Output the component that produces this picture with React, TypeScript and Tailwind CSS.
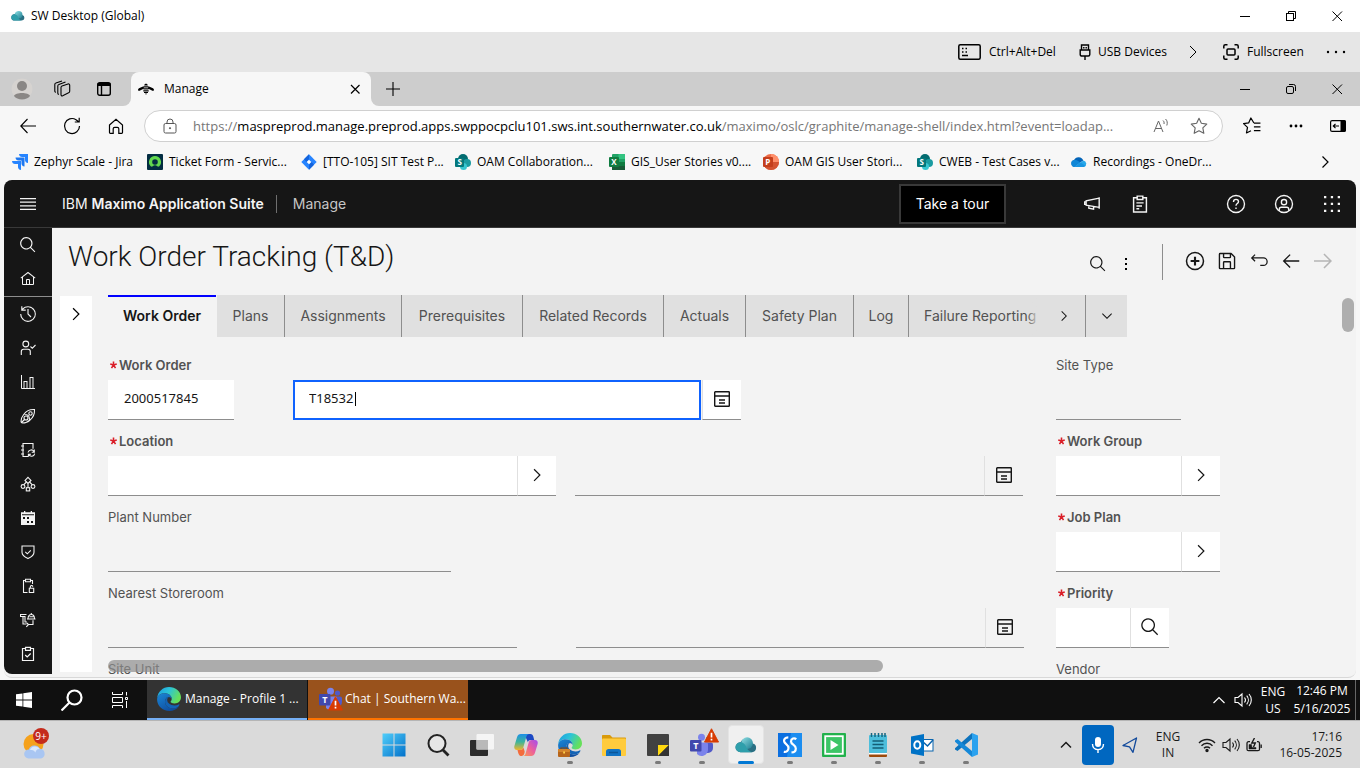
import React, { useId } from "react";
import type { ReactNode } from "react";

type IconProps = { size?: number; className?: string };

/* ---------- icon helpers ---------- */

function Solid({ d, size = 16, box = 32, className = "" }: IconProps & { d: string; box?: number }) {
  return (
    <svg width={size} height={size} viewBox={`0 0 ${box} ${box}`} fill="currentColor" className={`shrink-0 ${className}`} aria-hidden="true">
      <path d={d} />
    </svg>
  );
}

function Line({ children, size = 16, box = 16, weight = 1, className = "" }: IconProps & { children: ReactNode; box?: number; weight?: number }) {
  return (
    <svg width={size} height={size} viewBox={`0 0 ${box} ${box}`} fill="none" stroke="currentColor" strokeWidth={weight} className={`shrink-0 ${className}`} aria-hidden="true">
      {children}
    </svg>
  );
}

const SEARCH = "M29,27.5859l-7.5521-7.5521a11.0177,11.0177,0,1,0-1.4141,1.4141L27.5859,29ZM4,13a9,9,0,1,1,9,9A9.01,9.01,0,0,1,4,13Z";
const HOME = "M16.6123,2.2138a1.01,1.01,0,0,0-1.2427,0L1,13.4194l1.2427,1.5717L4,13.6209V26a2.0041,2.0041,0,0,0,2,2H26a2.0037,2.0037,0,0,0,2-2V13.63L29.7573,15,31,13.4282ZM18,26H14V18h4Zm2,0V18a2.0023,2.0023,0,0,0-2-2H14a2.002,2.002,0,0,0-2,2v8H6V12.0615l10-7.79,10,7.8005V26Z";
const RECENT = "M20.59 22 15 16.41V7h2v8.58l5 5.01L20.59 22zM16,2A13.94,13.94,0,0,0,6,6.23V2H4v8h8V8H7.08A12,12,0,1,1,4,16H2A14,14,0,1,0,16,2Z";
const BARS = "M27,28V6H19V28H15V14H7V28H4V2H2V28a2,2,0,0,0,2,2H30V28ZM13,28H9V16h4Zm12,0H21V8h4Z";
const CHEVRON_RIGHT = "M22 16 12 26 10.6 24.6 19.2 16 10.6 7.4 12 6z";
const CHEVRON_DOWN = "M16 22 6 12 7.4 10.6 16 19.2 24.6 10.6 26 12z";
const SAVE = "M27.71,9.29l-5-5A1,1,0,0,0,22,4H6A2,2,0,0,0,4,6V26a2,2,0,0,0,2,2H26a2,2,0,0,0,2-2V10A1,1,0,0,0,27.71,9.29ZM12,6h8v4H12Zm8,20H12V18h8Zm2,0V18a2,2,0,0,0-2-2H12a2,2,0,0,0-2,2v8H6V6h4v4a2,2,0,0,0,2,2h8a2,2,0,0,0,2-2V6.41l4,4V26Z";
const UNDO = "M23,10H6.8149l3.5874-3.5859L9,5,3,11,9,17l1.4023-1.4146L6.8179,12H23a5,5,0,0,1,0,10H18v2h5a7,7,0,0,0,0-14Z";
const ARROW_LEFT = "M14 26 15.41 24.59 7.83 17 28 17 28 15 7.83 15 15.41 7.41 14 6 4 16 14 26z";
const ARROW_RIGHT = "M18 6 16.57 7.393 24.15 15 4 15 4 17 24.15 17 16.57 24.573 18 26 28 16 18 6z";

function Cloud({ size = 14 }: IconProps) {
  const id = useId();
  return (
    <svg width={size} height={size} viewBox="0 0 20 20" className="shrink-0" aria-hidden="true">
      <defs>
        <linearGradient id={id} x1="0" y1="0" x2="1" y2="1">
          <stop offset="0" stopColor="#8fdfe4" />
          <stop offset="1" stopColor="#1d7f92" />
        </linearGradient>
      </defs>
      <path d="M5 16.500a4.500 4.500 0 0 1 0-9A6 6 0 0 1 16 8.600a4 4 0 0 1-.5 7.900z" fill="#2a6f83" />
      <circle cx="11" cy="8.300" r="5.300" fill={`url(#${id})`} />
      <path d="M5 16.500a4.500 4.500 0 1 1 3-7.800c2 1.400 2 3.500 3.600 5.500 1 1.300 2.500 2 4 2.300z" fill="#2f9fab" />
    </svg>
  );
}

function EdgeLogo({ size = 24, briefcase = false }: IconProps & { briefcase?: boolean }) {
  const id = useId();
  return (
    <svg width={size} height={size} viewBox="0 0 24 24" className="shrink-0" aria-hidden="true">
      <defs>
        <linearGradient id={`${id}a`} x1="0" y1="0" x2="1" y2=".4">
          <stop offset="0" stopColor="#1c9be0" />
          <stop offset=".5" stopColor="#2cc3d8" />
          <stop offset="1" stopColor="#66e05a" />
        </linearGradient>
        <linearGradient id={`${id}b`} x1="0" y1="0" x2=".7" y2="1">
          <stop offset="0" stopColor="#1b87d6" />
          <stop offset="1" stopColor="#0e4a9c" />
        </linearGradient>
      </defs>
      <path d="M.2 11C.8 4.700 5.900 0 12 0c6.600 0 12 4.400 12 10.300 0 3.600-2.700 6.200-6.300 6.200-3 0-4.300-1.100-4.100-1.900.2-.6 1.100-1 1.100-2.700C14.700 9.200 12 6.300 7.700 6.300 3.900 6.300 1.200 8.300.2 11z" fill={`url(#${id}a)`} />
      <path d="M.1 12.500C.1 9 3.400 6.300 7.700 6.300c4.300 0 7 2.900 7 5.600-.6-1.300-1.800-2-3-2-2 0-3.700 2-3.700 4.900 0 4 4 6.700 8 6.700 2.400 0 4.400-.7 5.700-1.700-1.800 2.600-5.400 4.200-9.200 4.200C5.500 24 .1 18.800.1 12.500z" fill={`url(#${id}b)`} />
      <path d="M11.700 9.900c-2 0-3.700 2-3.700 4.900 0 4 4 6.700 8 6.700 3.200 0 5.600-1.400 6.400-3.400.3-.7-.3-.9-.8-.6-1.200.6-2.600.9-4 .9-4 0-7.400-2.300-7.400-5.400 0-1.300.6-2.300 1.500-3.100z" fill="#1363b5" />
      {briefcase && (
        <g>
          <path d="M3 16.500V15h6v1.500" stroke="#8a4708" strokeWidth="1.200" fill="none" />
          <rect x="0" y="16" width="12" height="8" rx="1" fill="#b7651a" />
          <rect x="0" y="16" width="12" height="3" rx="1" fill="#d4842b" />
          <rect x="5.200" y="18.500" width="1.800" height="2" fill="#ffd04a" />
        </g>
      )}
    </svg>
  );
}

function Teams({ size = 24 }: IconProps) {
  return (
    <svg width={size} height={size} viewBox="0 0 24 24" className="shrink-0" aria-hidden="true">
      <circle cx="18.500" cy="6" r="2.600" fill="#5059c9" />
      <circle cx="11.500" cy="4.200" r="3.500" fill="#7b83eb" />
      <path d="M15.500 9.500H21c1.100 0 2 .9 2 2V15a5 5 0 0 1-5 5c-1.500 0-2.500-.5-2.500-.5z" fill="#5059c9" />
      <path d="M7 9.500h9.500c.8 0 1.500.7 1.500 1.500v5.500a6.500 6.500 0 0 1-11 4.600z" fill="#7b83eb" />
      <rect x="0" y="7" width="11.500" height="11.500" rx="1" fill="#4148ad" />
      <text x="5.750" y="16" textAnchor="middle" fontSize="9" fontWeight="700" fontFamily="Open Sans, sans-serif" fill="#fff">T</text>
    </svg>
  );
}

function Warning({ size = 15, className = "" }: IconProps) {
  return (
    <svg width={size} height={size} viewBox="0 0 16 16" className={className} aria-hidden="true">
      <path d="M8 .8 15.500 15H.5z" fill="#d83b01" stroke="#d83b01" strokeLinejoin="round" />
      <path d="M8 5v5M8 11.500v1.800" stroke="#fff" strokeWidth="1.800" />
    </svg>
  );
}

function WindowsEleven() {
  const id = useId();
  return (
    <svg width="24" height="24" viewBox="0 0 24 24" aria-hidden="true">
      <defs>
        <linearGradient id={id} gradientUnits="userSpaceOnUse" x1="0" y1="0" x2="24" y2="24">
          <stop offset="0" stopColor="#53d0fb" />
          <stop offset="1" stopColor="#006fc9" />
        </linearGradient>
      </defs>
      <path d="M.5.5h11v11H.5zM12.500.5h11v11h-11zM.5 12.500h11v11H.5zM12.500 12.500h11v11h-11z" fill={`url(#${id})`} />
    </svg>
  );
}

function Copilot() {
  const id = useId();
  return (
    <svg width="24" height="24" viewBox="0 0 24 24" aria-hidden="true">
      <defs>
        <linearGradient id={`${id}a`} x1="0" y1="0" x2="0" y2="1">
          <stop offset="0" stopColor="#1d8fe8" />
          <stop offset=".5" stopColor="#3db59a" />
          <stop offset="1" stopColor="#f0b52a" />
        </linearGradient>
        <linearGradient id={`${id}b`} x1="1" y1="0" x2="0" y2="1">
          <stop offset="0" stopColor="#a24df0" />
          <stop offset=".5" stopColor="#ec5f9c" />
          <stop offset="1" stopColor="#fb9a4e" />
        </linearGradient>
      </defs>
      <path d="M11 1h5.500c1.500 0 2.400 1 2.800 2.400L20.200 7h-3.500c-1.600 0-2.300.8-2.800 2.300L12 5z" fill="#1c49c4" />
      <path d="M6.800 1H15c-1.800.3-2.300 1.500-2.800 3.300L9.300 14.600C8.900 16 8 17 6.300 17H3C.8 17-.2 15.300.4 13L3 4.200C3.700 2 5 1 6.800 1z" fill={`url(#${id}a)`} />
      <path d="M17.200 23H9c1.800-.3 2.300-1.500 2.800-3.300L14.700 9.400C15.100 8 16 7 17.700 7H21c2.200 0 3.200 1.700 2.600 4L21 19.800c-.7 2.200-2 3.200-3.800 3.200z" fill={`url(#${id}b)`} />
      <path d="M3.500 17h3c1.500 0 2.500-1 3-2.400l1.200 4.200c-.5 2.300-1 4.200-3 4.200C5 23 4.500 21 3.500 17z" fill="#f36c3c" />
    </svg>
  );
}

function OfficeTile({ kind }: { kind: "S" | "X" | "P" }) {
  return (
    <svg width="16" height="16" viewBox="0 0 16 16" className="shrink-0" aria-hidden="true">
      {kind === "S" && (
        <g>
          <circle cx="8" cy="5" r="5" fill="#036c70" />
          <circle cx="12" cy="9" r="4" fill="#1a9ba1" />
          <circle cx="8.500" cy="12.500" r="3.500" fill="#37c6d0" />
          <rect x="0" y="4" width="9" height="9" rx="1" fill="#03787c" />
        </g>
      )}
      {kind === "X" && (
        <g>
          <rect x="3" y="0" width="13" height="16" rx="1" fill="#21a366" />
          <path d="M9.500 0H15a1 1 0 0 1 1 1v4H9.500z" fill="#33c481" />
          <path d="M3 8h13v8H3z" fill="#185c37" />
          <path d="M9.500 8H16v4H9.500z" fill="#107c41" />
          <rect x="0" y="3" width="10" height="10" rx="1" fill="#107c41" />
        </g>
      )}
      {kind === "P" && (
        <g>
          <circle cx="8" cy="8" r="8" fill="#ed6c47" />
          <path d="M8 0a8 8 0 0 1 8 8H8z" fill="#ff8f6b" />
          <path d="M0 8h16A8 8 0 0 1 0 8z" fill="#d35230" />
          <rect x="0" y="3" width="10" height="10" rx="1" fill="#c43e1c" />
        </g>
      )}
      <text x="4.800" y="11.200" textAnchor="middle" fontSize="8" fontWeight="700" fontFamily="Open Sans, sans-serif" fill="#fff">{kind}</text>
    </svg>
  );
}

const zephyr = (
  <svg width="16" height="16" viewBox="0 0 16 16" className="shrink-0" aria-hidden="true">
    <path d="M7 0h9v9c-2 0-3-1.500-3-3V3h-3C8.500 3 7 2 7 0z" fill="#2684ff" />
    <path d="M3.500 3.500h9v9c-2 0-3-1.500-3-3v-3h-3c-1.500 0-3-1-3-3z" fill="#1f78f0" />
    <path d="M0 7h9v9c-2 0-3-1.500-3-3v-3H3c-1.500 0-3-1-3-3z" fill="#2684ff" />
  </svg>
);
const ticket = (
  <svg width="16" height="16" viewBox="0 0 16 16" className="shrink-0" aria-hidden="true">
    <rect width="16" height="16" rx="1" fill="#032d42" />
    <path d="M8 2a6 6 0 0 0-4.300 10.200c.6.6 1.400.6 2 .1a3.600 3.600 0 0 1 4.600 0c.6.5 1.400.5 2-.1A6 6 0 0 0 8 2zm0 3.200a2.800 2.800 0 1 1 0 5.600 2.800 2.800 0 0 1 0-5.600z" fill="#62d84e" />
  </svg>
);
const jira = (
  <svg width="16" height="16" viewBox="0 0 16 16" className="shrink-0" aria-hidden="true">
    <path d="M8 .3 15.700 8 8 15.700.3 8z" fill="#2684ff" />
    <path d="M8 .3v5L5.500 8 3 5.300z" fill="#1463dc" />
    <path d="M8 15.700v-5L10.500 8l2.500 2.700z" fill="#1463dc" />
    <path d="M8 5.700 10.300 8 8 10.300 5.700 8z" fill="#fff" />
  </svg>
);
const onedrive = (
  <svg width="16" height="16" viewBox="0 0 16 16" className="shrink-0" aria-hidden="true">
    <path d="M3.500 13A3.500 3.500 0 0 1 3 6.100 5 5 0 0 1 12.300 6.600L7 10z" fill="#0364b8" />
    <path d="M12.300 6.600A3.300 3.300 0 0 1 13 13H3.500z" fill="#28a8ea" />
    <path d="M3 6.100c1.800-.4 3 .2 4.500 1.200L14 11.500c-.6 1-1 1.500-1.500 1.500h-9A3.500 3.500 0 0 1 3 6.100z" fill="#1490df" opacity=".8" />
  </svg>
);

/* ---------- shared parts ---------- */

function IconButton({ label, className, children }: { label: string; className: string; children: ReactNode }) {
  return (
    <button type="button" aria-label={label} className={`flex shrink-0 items-center justify-center ${className}`}>
      {children}
    </button>
  );
}

function WindowControls({ round = false }: { round?: boolean }) {
  return (
    <div className="flex h-full">
      <IconButton label="Minimize" className="h-full w-[46px]">
        <Line><path d="M3 8.500h10" /></Line>
      </IconButton>
      <IconButton label="Restore" className="h-full w-[46px]">
        <Line>
          <rect x="3.500" y="5.500" width="7" height="7" rx={round ? 1.5 : 0} />
          <path d={round ? "M6 3.500h4.500a2 2 0 0 1 2 2V10" : "M5.500 5.500v-2h7v7h-2"} />
        </Line>
      </IconButton>
      <IconButton label="Close" className="h-full w-[46px]">
        <Line><path d="m3.500 3.500 9.500 9.500M13 3.500 3.500 13" /></Line>
      </IconButton>
    </div>
  );
}

/* ---------- remote session chrome ---------- */

function SessionBar() {
  return (
    <>
      <header className="flex h-8 shrink-0 items-center justify-between bg-white pl-[11px]">
        <div className="flex items-center gap-[6px]">
          <Cloud size={14} />
          <h1>SW Desktop (Global)</h1>
        </div>
        <WindowControls />
      </header>
      <div className="flex h-10 shrink-0 items-center justify-end bg-[#e6e6e6] pr-1">
        <button type="button" className="flex w-[121px] items-center gap-2">
          <svg width="23" height="16" viewBox="0 0 23 16" fill="none" stroke="#000" strokeWidth="1.500" aria-hidden="true">
            <rect x=".8" y=".8" width="21.400" height="14.400" rx="1.500" />
            <path d="M4 4.500h1.500M7.500 4.500H9M4 8h1.500M7.500 8H9M4 11.500h6" />
          </svg>
          Ctrl+Alt+Del
        </button>
        <button type="button" className="flex w-[104px] items-center gap-[7px]">
          <svg width="12" height="16" viewBox="0 0 12 16" fill="none" stroke="#000" strokeWidth="1.400" aria-hidden="true">
            <path d="M2.500 6V1h7v5M1.200 6h9.600v4.500c0 1-.8 1.500-1.500 1.500H2.700c-.7 0-1.500-.5-1.500-1.500zM6 12v4M4.800 3v1.500M7.200 3v1.500" />
          </svg>
          USB Devices
        </button>
        <IconButton label="More devices" className="mr-5 w-5">
          <Line><path d="m5 2 6 6-6 6" /></Line>
        </IconButton>
        <button type="button" className="flex w-[93px] items-center gap-2">
          <Line weight={1.5}>
            <path d="M.8 4.500V2.300c0-.8.700-1.500 1.500-1.500h2.200M11.500.8h2.200c.8 0 1.500.7 1.500 1.500v2.200M15.200 11.500v2.200c0 .8-.7 1.500-1.500 1.500h-2.200M4.500 15.200H2.300c-.8 0-1.500-.7-1.500-1.500v-2.200" />
            <rect x="4" y="5" width="8" height="6" rx="1" />
          </Line>
          Fullscreen
        </button>
        <IconButton label="More options" className="w-10">
          <svg width="20" height="4" viewBox="0 0 20 4" aria-hidden="true"><circle cx="2" cy="2" r="1.200" /><circle cx="10" cy="2" r="1.200" /><circle cx="18" cy="2" r="1.200" /></svg>
        </IconButton>
      </div>
    </>
  );
}

/* ---------- browser chrome ---------- */

const bookmarks: { label: string; icon: ReactNode; width: string }[] = [
  { label: "Zephyr Scale - Jira", icon: zephyr, width: "w-[135px]" },
  { label: "Ticket Form - Servic...", icon: ticket, width: "w-[154px]" },
  { label: "[TTO-105] SIT Test P...", icon: jira, width: "w-[154px]" },
  { label: "OAM Collaboration...", icon: <OfficeTile kind="S" />, width: "w-[154px]" },
  { label: "GIS_User Stories v0....", icon: <OfficeTile kind="X" />, width: "w-[154px]" },
  { label: "OAM GIS User Stori...", icon: <OfficeTile kind="P" />, width: "w-[154px]" },
  { label: "CWEB - Test Cases v...", icon: <OfficeTile kind="S" />, width: "w-[154px]" },
  { label: "Recordings - OneDr...", icon: onedrive, width: "w-[154px]" },
];

function BrowserBar() {
  return (
    <div className="shrink-0 bg-[#f7f7f7]">
      <div className="flex h-[34px] items-stretch">
        <div className="flex items-center rounded-br-lg bg-[#cdcdcd] pr-[3px]">
          <IconButton label="Profile" className="w-11">
            <svg width="22" height="22" viewBox="0 0 22 22" aria-hidden="true">
              <circle cx="11" cy="11" r="10.500" fill="#d6d3d0" />
              <circle cx="11" cy="8" r="5" fill="#8a8785" />
              <path d="M3 18c1-4 15-4 16 0-3 4.500-13 4.500-16 0z" fill="#8a8785" />
            </svg>
          </IconButton>
          <IconButton label="Workspaces" className="w-9">
            <Line size={18} box={18} weight={1.1}>
              <path d="M8 7.500c0-.7.400-1.200 1-1.400l6-2.100c1-.3 1.700.2 1.700 1.200v6c0 .8-.4 1.300-1.100 1.500L9.700 15.800c-1 .4-1.700-.2-1.700-1.100z" />
              <path d="M6 14.300c-.8.100-1.200-.4-1.200-1.200V6c0-.8.400-1.300 1.100-1.500L12.500 2M3 12.200c-.8.100-1.200-.4-1.200-1.200V4.500c0-.8.4-1.300 1.100-1.500L9 .9" />
            </Line>
          </IconButton>
          <IconButton label="Tab actions" className="w-12">
            <Line weight={1.4}>
              <rect x="1.700" y="1.700" width="12.600" height="12.600" rx="2" />
              <path d="M1.700 3.500h12.600" strokeWidth="3" />
              <path d="M5.500 4v10" />
            </Line>
          </IconButton>
        </div>
        <div className="bg-[#cdcdcd]">
          <div className="flex h-full w-60 items-center rounded-t-lg bg-[#f7f7f7] pl-[7px] pr-2">
            <svg width="16" height="16" viewBox="0 0 16 16" aria-hidden="true">
              <path d="M5.600 5.200 1 7.200c-1 .5-1.200 1.800-.7 2.400.3.400.8.400 1.300.2L6 7.500zM10.400 5.200 15 7.200c1 .5 1.200 1.800.7 2.400-.3.400-.8.400-1.300.2L10 7.500zM6.200 4.500c0-2.400 3.600-2.400 3.600 0zM5.800 5.200h4.400v1.300H5.800zM5.500 7.300h5v1.200h-5zM5.300 9.200h5.400v1.200H5.300zM6 11.100h4v1H6zM7 12.600h2L8 13.800z" />
            </svg>
            <span className="ml-[10px] flex-1">Manage</span>
            <IconButton label="Close tab" className="size-4">
              <Line weight={1.2}><path d="m4 4 8.500 8.500M12.500 4 4 12.500" /></Line>
            </IconButton>
          </div>
        </div>
        <div className="flex flex-1 items-center justify-between rounded-bl-lg bg-[#cdcdcd]">
          <IconButton label="New tab" className="w-11">
            <Line weight={1.1}><path d="M8 1v14M1 8h14" /></Line>
          </IconButton>
          <WindowControls round />
        </div>
      </div>

      <div className="flex h-10 items-center pl-[6px] pr-[2px]">
        <IconButton label="Back" className="w-11">
          <Line weight={1.1}><path d="M7.500 1 .8 8l6.700 7M.8 8H16" /></Line>
        </IconButton>
        <IconButton label="Reload" className="w-11">
          <Line size={18} box={18} weight={1.2}><path d="M16.500 9A7.500 7.500 0 1 1 13 2.700L16 5M16.200.8V5h-4.400" /></Line>
        </IconButton>
        <IconButton label="Home" className="mr-[6px] w-11">
          <Line weight={1.200}><path d="M1.500 7 8 1.200 14.500 7v7.500a.8.8 0 0 1-.8.8h-2.900v-4.500a1.500 1.500 0 0 0-1.500-1.500H6.700a1.500 1.500 0 0 0-1.500 1.500v4.500H2.300a.8.8 0 0 1-.8-.8z" /></Line>
        </IconButton>
        <div className="flex h-8 min-w-0 flex-1 items-center rounded-full border border-[#d0d0d0] bg-white pl-[17px] pr-[5px]">
          <Line size={16} weight={1} className="text-[#555]">
            <rect x="2" y="5.500" width="12" height="9.500" rx="1.500" />
            <path d="M5 5.500V4a3 3 0 0 1 6 0v1.500" />
            <circle cx="8" cy="10.200" r=".6" fill="currentColor" />
          </Line>
          <a href="#address" className="ml-[15px] min-w-0 flex-1 truncate text-[13px] leading-5 text-[#767676]">
            https://<span className="text-black">maspreprod.manage.preprod.apps.swppocpclu101.sws.int.southernwater.co.uk</span>/maximo/oslc/graphite/manage-shell/index.html?event=loadap...
          </a>
          <IconButton label="Read aloud" className="w-10 text-[#666]">
            <Line><path d="m1 14 4.500-11L10 14M2.600 10.500h6M10 2.500c1 .8 1.300 2 1 3.500M12.500 1c1.800 1.500 2.200 4 1.300 6.500" /></Line>
          </IconButton>
          <IconButton label="Favourite" className="w-9 text-[#666]">
            <Line size={18}><path d="m8 1.200 2.100 4.400 4.800.7-3.500 3.400.9 4.800L8 12.200l-4.300 2.300.9-4.800L1.100 6.300l4.800-.7z" strokeLinejoin="round" /></Line>
          </IconButton>
        </div>
        <IconButton label="Favourites list" className="ml-[7px] w-11">
          <Line size={18} weight={1.1}><path d="M9.700 5.300 7 .9 5 5.300l-4.500.6L4 9.200l-.9 5 4-2M9.700 5.500h5.800M9.700 8.800h5.800M9.700 12.200h5.800" strokeLinejoin="round" /></Line>
        </IconButton>
        <IconButton label="Settings and more" className="w-11">
          <svg width="14" height="4" viewBox="0 0 14 4" aria-hidden="true"><circle cx="2" cy="2" r="1.400" /><circle cx="7" cy="2" r="1.400" /><circle cx="12" cy="2" r="1.400" /></svg>
        </IconButton>
        <IconButton label="Sidebar" className="w-10">
          <svg width="16" height="12" viewBox="0 0 16 12" aria-hidden="true">
            <rect x=".6" y=".6" width="14.800" height="10.800" rx="1.500" fill="none" stroke="#000" strokeWidth="1.200" />
            <path d="M10.500 0H14a2 2 0 0 1 2 2v8a2 2 0 0 1-2 2h-3.500z" />
            <path d="M9 6H3.500M5.500 3.800 3.300 6l2.200 2.200" stroke="#000" strokeWidth="1.200" fill="none" />
          </svg>
        </IconButton>
      </div>

      <nav aria-label="Bookmarks" className="flex h-[34px] items-center pb-[2px] pl-3">
        {bookmarks.map((b) => (
          <a key={b.label} href="#bookmark" className={`flex items-center gap-[6px] whitespace-nowrap ${b.width}`}>
            {b.icon}
            {b.label}
          </a>
        ))}
        <IconButton label="More bookmarks" className="ml-auto mr-[27px] w-4">
          <Line weight={1.2}><path d="m5.500 2.500 5.500 5.500-5.500 5.500" /></Line>
        </IconButton>
      </nav>
    </div>
  );
}

/* ---------- application ---------- */

function SuiteHeader() {
  return (
    <header className="flex h-12 shrink-0 items-center border-b border-[#393939] bg-[#161616] text-[14px] text-[#f4f4f4]">
      <IconButton label="Menu" className="w-12">
        <Solid box={20} size={20} d="M2 14.800H18V16H2zM2 11.200H18V12.400H2zM2 7.600H18V8.800H2zM2 4H18V5.200H2z" />
      </IconButton>
      <p className="ml-[10px] whitespace-nowrap">IBM <strong className="font-semibold">Maximo Application Suite</strong></p>
      <p className="ml-3 border-l border-[#6f6f6f] pl-4 leading-[18px] text-[#c6c6c6]">Manage</p>
      <button type="button" className="ml-auto mr-[62px] h-10 w-[107px] border-2 border-[#393939] bg-black text-white">Take a tour</button>
      <IconButton label="Announcements" className="w-12">
        <Line weight={1.3} size={17}><path d="M14.300 2v11M14.300 3 2 5.500v4l12.300 2.200M2 6.500H.5v2.300H2M4.500 10v2.500l4.500.8v-2.400" /></Line>
      </IconButton>
      <IconButton label="Tasks" className="mr-12 w-12">
        <Line weight={1.3} size={18}><path d="M5 2.500H2.300v12.700h11.400V2.500H11M5.500 1h5v3h-5zM4.800 7h6.400M4.800 9.700h5M4.800 12.300h2.500" /></Line>
      </IconButton>
      <IconButton label="Help" className="w-12">
        <Line weight={1.1} size={20}><circle cx="8" cy="8" r="6.800" /><path d="M6 6.300c0-1.200.8-2 2-2s2 .8 2 1.900c0 1.400-2 1.500-2 3.200M8 10.800v1.200" /></Line>
      </IconButton>
      <IconButton label="Account" className="w-12">
        <Line weight={1.1} size={20}><circle cx="8" cy="8" r="6.800" /><circle cx="8" cy="6.500" r="2.100" /><path d="M4.200 13.300v-1c0-1 .8-1.700 1.700-1.700h4.200c1 0 1.700.7 1.700 1.700v1" /></Line>
      </IconButton>
      <IconButton label="App switcher" className="w-12">
        <Solid box={16} size={16} d="M0 0h2.300v2.300H0zM6.800 0h2.300v2.300H6.800zM13.700 0H16v2.300h-2.300zM0 6.800h2.300v2.300H0zM6.800 6.800h2.300v2.300H6.800zM13.700 6.800H16v2.300h-2.300zM0 13.700h2.300V16H0zM6.800 13.700h2.300V16H6.800zM13.700 13.700H16V16h-2.300z" />
      </IconButton>
    </header>
  );
}

const sideItems: { label: string; icon: ReactNode }[] = [
  { label: "Search", icon: <Solid size={18} d={SEARCH} /> },
  { label: "Home", icon: <Solid size={16} d={HOME} /> },
  { label: "Recent", icon: <Solid size={18} d={RECENT} /> },
  { label: "Assignments", icon: <Line weight={1.1}><circle cx="5.800" cy="4" r="2.900" /><path d="M1.300 15v-3.500c0-1.300 1-2.300 2.300-2.300H8c1.300 0 2.300 1 2.300 2.300V15M10.500 6.500l1.800 1.800L15.500 5" /></Line> },
  { label: "Analytics", icon: <Solid size={16} d={BARS} /> },
  { label: "Deploy", icon: <Line weight={1.1}><path d="M14.500 1.500c-4-.2-8 1-10.500 4.500C2 8.500 1 10.500 1 13.500c0 1 .5 1.500 1.500 1.500 3 0 5.500-1 7.500-3 3.200-2.500 4.700-6.500 4.500-10.500zM4.500 6.500c3.500 0 5 1.500 5 5M1.500 14.500 5 11" /><circle cx="10.500" cy="5.500" r="1.700" /><circle cx="6" cy="10" r="2" /></Line> },
  { label: "Records", icon: <Line weight={1.1}><path d="M8 14.500H3v-13h10v5.300M1 4h3M1 8h3M1 12h3M8 10.500A3.200 3.200 0 0 1 14 9.700M14.300 7.500v2.700h-2.600M14.700 11.700a3.200 3.200 0 0 1-6 .8M8.400 14.800v-2.600H11" /></Line> },
  { label: "Hierarchy", icon: <Line weight={1.100}><path d="M8 1.300 11 4.400 8 7.500 5 4.400z" /><circle cx="3" cy="10.500" r="1.900" /><circle cx="13" cy="10.500" r="1.900" /><rect x="6.300" y="11.700" width="3.400" height="3.200" /><path d="M8 7.500v4M6.500 6 3.800 8.700M9.500 6l2.700 2.700" /></Line> },
  { label: "Calendar", icon: <svg width="14" height="14" viewBox="0 0 14 14" aria-hidden="true"><path fill="currentColor" fillRule="evenodd" d="M3 0h1.300v1.200h5.400V0H11v1.200h3V14H0V1.200h3zM1 3.200v1h12v-1zM2 6v2h2V6zM6 6v2h2V6zM6 10v2h2v-2zM10 10v2h2v-2z" /></svg> },
  { label: "Safety", icon: <Line weight={1.100}><path d="M2 2h12v6.300c0 3-3 5-6 6.300-3-1.300-6-3.300-6-6.300zM5.300 7.800l2 2 3.500-3.500" /></Line> },
  { label: "Permits", icon: <Line weight={1.100}><path d="M7.500 14.500h-4v-12h2M10.500 2.500h2V6M5.500 1.300h5v2.500h-5zM9.300 10.300h4.400v4.200H9.300zM10.300 10.300V9c0-2 2.400-2 2.400-.3" /></Line> },
  { label: "Requests", icon: <Line weight={1.100}><path d="M6.500 2.500h-6V5M.5 4.500h5M3 4.500v7.500h3.500M5 4.500V10h2M6.300 14.800 8.500 12.500 6.800 11M8.500 12.500H13V8.300M7 7h8.500M8 7c0-3 1.500-4.500 3.300-4.500S14.500 4 14.500 7M11.300 2.500V1M9.500 4.800h4" /></Line> },
  { label: "Checklist", icon: <Line weight={1.200}><path d="M5.500 2.500h-3v12h11v-12h-3M5.500 1.300h5v3h-5zM5.200 9l2 2 3.500-3.500" /></Line> },
];

function SideRail() {
  return (
    <nav aria-label="Modules" className="mb-[3px] w-12 shrink-0 overflow-hidden rounded-bl-lg bg-[#161616] text-[#f4f4f4]">
      {sideItems.map((item, i) => (
        <React.Fragment key={item.label}>
          {i === 2 && <hr className="border-t border-[#8d8d8d]" />}
          <IconButton label={item.label} className="h-[34px] w-full">{item.icon}</IconButton>
        </React.Fragment>
      ))}
    </nav>
  );
}

function PageTitle() {
  return (
    <div className="flex h-[67px] shrink-0 justify-between pl-4">
      <h2 className="pt-[9px] font-[Roboto] text-[28px] font-light leading-10 text-[#161616]">Work Order Tracking (T&amp;D)</h2>
      <div className="flex items-start pt-4 text-[#161616]">
        <IconButton label="Find" className="h-10 w-7"><Solid size={18} d={SEARCH} /></IconButton>
        <IconButton label="More actions" className="mr-[22px] h-10 w-7">
          <svg width="4" height="12" viewBox="0 0 4 12" aria-hidden="true"><path d="M1 0h2v2H1zM1 5h2v2H1zM1 10h2v2H1z" /></svg>
        </IconButton>
        <div className="flex h-9 items-center border-l border-[#8d8d8d] pb-[2px] pl-4 pr-[17px]">
          <IconButton label="New record" className="w-8">
            <Line weight={1.2} size={20}><circle cx="8" cy="8" r="6.800" /><path d="M8 4.500v7M4.500 8h7" strokeWidth="1.700" /></Line>
          </IconButton>
          <IconButton label="Save" className="w-8"><Solid size={22} d={SAVE} /></IconButton>
          <IconButton label="Undo" className="w-8"><Solid size={20} d={UNDO} /></IconButton>
          <IconButton label="Previous" className="w-8"><Solid size={22} d={ARROW_LEFT} /></IconButton>
          <IconButton label="Next" className="w-8 text-[#b5b5b5]"><Solid size={24} d={ARROW_RIGHT} /></IconButton>
        </div>
      </div>
    </div>
  );
}

const tabs: { label: string; width: string }[] = [
  { label: "Plans", width: "w-[68px]" },
  { label: "Assignments", width: "w-[117px]" },
  { label: "Prerequisites", width: "w-[121px]" },
  { label: "Related Records", width: "w-[141px]" },
  { label: "Actuals", width: "w-[82px]" },
  { label: "Safety Plan", width: "w-[108px]" },
  { label: "Log", width: "w-[55px]" },
];

function Tabs() {
  return (
    <div role="tablist" className="flex h-[42px] shrink-0 text-[14px] text-[#525252]">
      <button type="button" role="tab" aria-selected="true" className="mr-px w-[108px] border-t-2 border-[#0000ff] pb-[2px] font-semibold text-[#161616]">Work Order</button>
      {tabs.map((t) => (
        <button key={t.label} type="button" role="tab" aria-selected="false" className={`whitespace-nowrap border-r border-[#8d8d8d] bg-[#e0e0e0] ${t.width}`}>{t.label}</button>
      ))}
      <button type="button" role="tab" aria-selected="false" className="relative w-[134px] whitespace-nowrap bg-[#e0e0e0] pl-[15px] text-left after:absolute after:inset-y-0 after:right-1 after:w-3 after:bg-linear-to-r after:from-transparent after:to-[#e0e0e0]">Failure Reporting</button>
      <IconButton label="Scroll tabs" className="w-[43px] border-r border-[#8d8d8d] bg-[#e0e0e0] text-[#161616]"><Solid size={16} d={CHEVRON_RIGHT} /></IconButton>
      <IconButton label="All tabs" className="w-[41px] bg-[#e0e0e0] text-[#161616]"><Solid size={16} d={CHEVRON_DOWN} /></IconButton>
    </div>
  );
}

function DetailIcon() {
  return <Line size={20} box={20} weight={1.4}><rect x="2.700" y="2.700" width="14.600" height="14.600" rx=".6" /><path d="M2.700 7h14.600M7 11h6M7 14h6" /></Line>;
}

type Action = "detail" | "chevron" | "search";

function LookupButton({ action, filled, label }: { action: Action; filled: boolean; label: string }) {
  return (
    <IconButton label={label} className={`h-10 w-[39px] border-b border-l border-b-[#8d8d8d] border-l-[#e0e0e0] pb-px text-[#161616] ${filled ? "bg-white" : ""}`}>
      {action === "detail" && <DetailIcon />}
      {action === "chevron" && <Solid size={20} d={CHEVRON_RIGHT} />}
      {action === "search" && <Solid size={20} d={SEARCH} />}
    </IconButton>
  );
}

function FieldLabel({ htmlFor, required, children }: { htmlFor: string; required?: boolean; children: ReactNode }) {
  return (
    <label htmlFor={htmlFor} className={`mb-[7px] flex items-center text-[13px] leading-4 text-[#525252] ${required ? "pl-[2px] font-semibold" : ""}`}>
      {required && (
        <svg width="7" height="8" viewBox="0 0 8 8" className="mr-[2px] text-[#da1e28]" aria-hidden="true">
          <path d="M4 4V0M4 4 .3 2.800M4 4l3.700-1.200M4 4 1.700 7.500M4 4l2.300 3.500" stroke="currentColor" strokeWidth="1.800" />
        </svg>
      )}
      {children}
    </label>
  );
}

function TextBox({ id, label, width, value = "", readOnly = false }: { id: string; label?: string; width: string; value?: string; readOnly?: boolean }) {
  return (
    <input
      id={id}
      aria-label={label}
      defaultValue={value}
      readOnly={readOnly}
      className={`h-10 border-b border-[#8d8d8d] px-4 pb-1 font-['Noto_Sans'] text-[13px] text-[#161616] outline-none ${width} ${readOnly ? "bg-transparent" : "bg-white"}`}
    />
  );
}

function WorkOrderForm() {
  return (
    <form className="flex pt-5">
      <div className="flex w-[948px] shrink-0 flex-col gap-[13px]">
        <div>
          <FieldLabel htmlFor="wo" required>Work Order</FieldLabel>
          <div className="flex">
            <TextBox id="wo" width="w-[126px]" value="2000517845" />
            <div className="relative ml-[59px] mr-px">
              <input
                aria-label="Description"
                defaultValue="T18532"
                className="h-10 w-[408px] border-2 border-[#0f62fe] bg-white px-[14px] pb-1 font-['Noto_Sans'] text-[13px] text-[#161616] outline-none"
              />
              <span className="absolute left-[62px] top-3 h-[14px] w-px bg-black" />
            </div>
            <LookupButton action="detail" filled label="Long description" />
          </div>
        </div>
        <div>
          <FieldLabel htmlFor="location" required>Location</FieldLabel>
          <div className="flex">
            <TextBox id="location" width="w-[409px]" />
            <LookupButton action="chevron" filled label="Location menu" />
            <div className="ml-[19px] flex">
              <TextBox id="location-text" label="Location description" width="w-[409px]" readOnly />
              <LookupButton action="detail" filled={false} label="Location long description" />
            </div>
          </div>
        </div>
        <div>
          <FieldLabel htmlFor="plant">Plant Number</FieldLabel>
          <TextBox id="plant" width="w-[343px]" readOnly />
        </div>
        <div>
          <FieldLabel htmlFor="storeroom">Nearest Storeroom</FieldLabel>
          <div className="flex">
            <TextBox id="storeroom" width="w-[409px]" readOnly />
            <div className="ml-[59px] flex">
              <TextBox id="storeroom-text" label="Storeroom description" width="w-[409px]" readOnly />
              <LookupButton action="detail" filled={false} label="Storeroom long description" />
            </div>
          </div>
        </div>
        <div>
          <FieldLabel htmlFor="unit">Site Unit</FieldLabel>
          <TextBox id="unit" width="w-[343px]" readOnly />
        </div>
      </div>
      <div className="flex flex-col gap-[13px]">
        <div>
          <FieldLabel htmlFor="site-type">Site Type</FieldLabel>
          <TextBox id="site-type" width="w-[125px]" readOnly />
        </div>
        <div>
          <FieldLabel htmlFor="group" required>Work Group</FieldLabel>
          <div className="flex">
            <TextBox id="group" width="w-[125px]" />
            <LookupButton action="chevron" filled label="Work group menu" />
          </div>
        </div>
        <div>
          <FieldLabel htmlFor="plan" required>Job Plan</FieldLabel>
          <div className="flex">
            <TextBox id="plan" width="w-[125px]" />
            <LookupButton action="chevron" filled label="Job plan menu" />
          </div>
        </div>
        <div>
          <FieldLabel htmlFor="priority" required>Priority</FieldLabel>
          <div className="flex">
            <TextBox id="priority" width="w-[74px]" />
            <LookupButton action="search" filled label="Find priority" />
          </div>
        </div>
        <div>
          <FieldLabel htmlFor="vendor">Vendor</FieldLabel>
          <TextBox id="vendor" width="w-[125px]" readOnly />
        </div>
      </div>
    </form>
  );
}

function MaximoApp() {
  return (
    <div className="flex min-h-0 flex-1 flex-col bg-[#f7f7f7] px-1 pb-[2px]">
      <div className="relative flex min-h-0 flex-1 flex-col overflow-hidden rounded-lg border-b border-[#d8d8d8] bg-[#f3f3f3] font-['Inter']">
        <SuiteHeader />
        <div className="flex min-h-0 flex-1 overflow-hidden">
          <SideRail />
          <main className="flex min-w-0 flex-1 flex-col">
            <PageTitle />
            <div className="flex min-h-0 flex-1 pl-2">
              <aside className="mb-[5px] mt-px w-8 shrink-0 bg-white pt-2">
                <IconButton label="Expand panel" className="h-5 w-8"><Solid size={20} d={CHEVRON_RIGHT} /></IconButton>
              </aside>
              <div className="min-w-0 flex-1 overflow-hidden pl-4">
                <Tabs />
                <WorkOrderForm />
              </div>
            </div>
          </main>
        </div>
        <div className="absolute right-[2px] top-[118px] h-[34px] w-3 rounded-full bg-[#aeaeae]" />
        <div className="absolute bottom-[5px] left-[104px] h-3 w-[775px] rounded-full bg-[#8d8d8d]/70" />
      </div>
    </div>
  );
}

/* ---------- taskbars ---------- */

function Volume({ size = 18 }: IconProps) {
  return <Line size={size} box={18} weight={1.1}><path d="M1 6.500h3L8 3v12l-4-3.500H1zM10.500 6.500a4 4 0 0 1 0 5M12.700 4.700a6.500 6.500 0 0 1 0 8.600M15 3a9 9 0 0 1 0 12" /></Line>;
}

function RemoteTaskbar() {
  return (
    <div className="flex h-10 shrink-0 items-stretch bg-[#101010] text-white">
      <IconButton label="Start" className="w-12">
        <Solid size={16} box={16} d="M0 2.300 6.500 1.400v6.200H0zM7.300 1.300 16 0v7.600H7.300zM0 8.400h6.500v6.200L0 13.700zM7.300 8.400H16V16l-8.700-1.300z" />
      </IconButton>
      <IconButton label="Search" className="w-12">
        <Line size={22} box={22} weight={2.200}><circle cx="13.500" cy="8.500" r="7" /><path d="m8.500 13.500-8 8" /></Line>
      </IconButton>
      <IconButton label="Task view" className="mr-[3px] w-12">
        <Line size={16}><path d="M.5 0v2.500h10V0M.5 5.500h10v5H.5zM.5 16v-2.500h10V16M14.500 0v3.500M14.500 9v7M13.500 5.500h2v2h-2z" /></Line>
      </IconButton>
      <button type="button" className="mr-px flex w-40 items-center gap-1 border-b-2 border-[#76b0f5] bg-[#333] pl-[10px]">
        <EdgeLogo size={24} />
        <span className="whitespace-nowrap">Manage - Profile 1 ...</span>
      </button>
      <button type="button" className="flex w-40 items-center gap-[2px] border-b-2 border-[#ff7300] bg-[#99521c] pl-[11px]">
        <span className="relative">
          <Teams size={24} />
          <Warning size={15} className="absolute bottom-0 right-0" />
        </span>
        <span className="whitespace-nowrap">Chat | Southern Wa...</span>
      </button>
      <div className="ml-auto flex items-center">
        <IconButton label="Hidden icons" className="w-6"><Line weight={1.200}><path d="M2.500 11 8 5.500l5.500 5.500" /></Line></IconButton>
        <IconButton label="Volume" className="w-6"><Volume /></IconButton>
        <p className="w-9 text-center leading-[17px]">ENG<br />US</p>
        <p className="w-[62px] whitespace-nowrap text-center leading-[18px]">12:46 PM<br />5/16/2025</p>
        <div className="ml-[2px] h-10 w-[5px] border-l border-[#666]" />
      </div>
    </div>
  );
}

const pinned: { label: string; icon: ReactNode; running?: boolean; active?: boolean }[] = [
  { label: "Start", icon: <WindowsEleven /> },
  { label: "Search", icon: <svg width="24" height="24" viewBox="0 0 24 24" fill="none" stroke="#222" aria-hidden="true"><circle cx="11" cy="10.500" r="8.500" strokeWidth="2" fill="#e6e6e6" /><path d="m17 17 5.500 5.500" strokeWidth="2.800" /></svg> },
  { label: "Task view", icon: <svg width="24" height="24" viewBox="0 0 24 24" aria-hidden="true"><rect x="0" y="7" width="18" height="16" rx="1" fill="#2b2b2b" /><rect x="6.500" y="1" width="17.500" height="15.500" rx="1" fill="#f5f5f5" /><path d="M6.500 7H18v9.500H6.500z" fill="#b9b9b9" /></svg> },
  { label: "Copilot", icon: <Copilot /> },
  { label: "Edge", icon: <EdgeLogo briefcase />, running: true },
  { label: "Files", icon: <svg width="26" height="24" viewBox="0 0 26 24" aria-hidden="true"><path d="M1 3c0-.6.400-1 1-1h7l2.500 2.500H24c.6 0 1 .4 1 1V22H1z" fill="#d99a0b" /><rect x="1" y="5.500" width="24" height="17.500" rx="1" fill="#ffcb3d" /><path d="M5 23v-4.500c0-1.400 1-2.500 2.500-2.500h10c1.500 0 2.500 1 2.500 2.500V23z" fill="#1273c4" /><path d="M8 19.500h9" stroke="#0b569a" strokeWidth="1.500" /></svg> },
  { label: "Sticky notes", icon: <svg width="24" height="24" viewBox="0 0 24 24" aria-hidden="true"><rect x="1" y="1" width="22" height="22" rx="1" fill="#414141" /><path d="M12 12h11L12 23z" fill="#ffd90f" /><path d="M23 12v11H12z" fill="#333" /></svg>, running: true },
  { label: "Teams", icon: <span className="relative"><Teams /><Warning size={15} className="absolute -right-[5px] -top-[5px]" /></span>, running: true },
  { label: "Windows App", icon: <Cloud size={22} />, active: true },
  { label: "Sync", icon: <svg width="24" height="24" viewBox="0 0 24 24" aria-hidden="true"><rect width="24" height="24" fill="#0b6fe0" /><path d="M13 0h11v24H9z" fill="#1b8df0" /><path d="M10.300 4.300C7 4.300 5.500 6.500 6.200 8.700c.8 2.500 4.300 2.800 4.300 6.300 0 2.800-2.200 4.200-4.700 3.800M18.300 6.200c-2-1.600-5.300-.8-5.300 2.200 0 3.300 4.800 3.300 4.800 7 0 2.600-1.800 4-4.300 4" fill="none" stroke="#fff" strokeWidth="2.200" /></svg>, running: true },
  { label: "Recorder", icon: <svg width="24" height="24" viewBox="0 0 24 24" aria-hidden="true"><rect width="24" height="24" rx="1" fill="#22b14c" /><rect x="3.200" y="3.200" width="17.600" height="17.600" fill="#3cc566" stroke="#fff" strokeWidth="1.800" /><path d="m8.500 7 8 5-8 5z" fill="#fff" /></svg>, running: true },
  { label: "Notepad", icon: <svg width="20" height="24" viewBox="0 0 20 24" aria-hidden="true"><rect x="1" y="18" width="18" height="6" rx="1" fill="#9c4a0c" /><rect x="1" y="19.500" width="18" height="2" fill="#fff" /><rect x="1" y="2" width="18" height="18" rx="1" fill="#4dbedb" /><path d="M3.500 0v4M7 0v4M10.500 0v4M14 0v4M17 0v4" stroke="#176680" strokeWidth="1.500" /><path d="M4.500 8h11M4.500 11.500h11M4.500 15h11" stroke="#135d75" strokeWidth="1.500" /></svg>, running: true },
  { label: "Outlook", icon: <svg width="24" height="24" viewBox="0 0 24 24" aria-hidden="true"><rect x="11" y="6.500" width="12" height="11.500" fill="#fff" stroke="#0a64ad" /><path d="m12 8 5.500 5L23 7" fill="none" stroke="#0a64ad" strokeWidth="1.500" /><path d="M1 3.500 14 1v22L1 20.500z" fill="#0072c6" /><ellipse cx="7.300" cy="12" rx="3" ry="3.800" fill="none" stroke="#fff" strokeWidth="2" /></svg>, running: true },
  { label: "Code", icon: <svg width="24" height="24" viewBox="0 0 24 24" aria-hidden="true"><path d="M18 0 24 2.500v19L18 24z" fill="#2ba2ef" /><path d="M18 0v6L3.500 18 1 16.500v-1.300z" fill="#0d73bd" /><path d="M18 24v-6L3.500 6 1 7.500v1.300z" fill="#1488d8" /></svg>, running: true },
];

function LocalTaskbar() {
  return (
    <footer className="grid h-12 shrink-0 grid-cols-[1fr_auto_1fr] items-center border-t border-[#b5b5b5] bg-[#dadada] text-[#1a1a1a]">
      <IconButton label="Weather" className="ml-5 size-8">
        <span className="relative">
          <svg width="28" height="30" viewBox="0 0 28 30" aria-hidden="true">
            <circle cx="11.500" cy="14" r="10" fill="#f5a11c" />
            <path d="M6.500 28.500a4.500 4.500 0 0 1 .3-9 6 6 0 0 1 11-.8 5 5 0 0 1 1.200 9.800z" fill="#a9c6f2" />
            <path d="M8 20a5.500 5.500 0 0 1 9.800-1c-3-.5-4 2-4.500 3.500C12 20 10 20 8 20z" fill="#d9e7fb" />
          </svg>
          <span className="absolute right-px -top-[2px] flex size-4 items-center justify-center rounded-full bg-[#c42b1c] text-[10px] text-white">9+</span>
        </span>
      </IconButton>
      <div className="flex">
        {pinned.map((p) => (
          <button
            key={p.label}
            type="button"
            aria-label={p.label}
            className={`relative flex h-[47px] w-11 items-center justify-center ${p.active ? "before:absolute before:inset-x-1 before:inset-y-1 before:rounded before:border before:border-[#e4e4e4] before:bg-[#f0f0f0]" : ""}`}
          >
            <span className="relative flex">{p.icon}</span>
            {p.running && <span className="absolute bottom-1 left-[19px] h-[3px] w-[6px] rounded-full bg-[#7a7a7a]" />}
            {p.active && <span className="absolute bottom-1 left-[14px] h-[3px] w-4 rounded-full bg-[#0078d4]" />}
          </button>
        ))}
      </div>
      <div className="flex items-center justify-end pr-[18px]">
        <IconButton label="Hidden icons" className="mr-[2px] w-7"><Line weight={1.500}><path d="m3 10.500 5-5 5 5" /></Line></IconButton>
        <IconButton label="Microphone" className="h-10 w-8 rounded bg-[#0067c0] text-white">
          <svg width="14" height="18" viewBox="0 0 14 18" aria-hidden="true"><rect x="4" y="1" width="6" height="10" rx="3" fill="#fff" /><path d="M1.500 8c0 7.500 11 7.500 11 0M7 13.500V17" fill="none" stroke="#fff" strokeWidth="1.400" /></svg>
        </IconButton>
        <IconButton label="Location" className="w-8 text-[#124a9c]"><Line weight={1.300}><path d="M14.500 1 1 8.500l6.500 1.300 3.500 5.500z" strokeLinejoin="round" /></Line></IconButton>
        <p className="ml-[2px] mr-[10px] w-10 text-center leading-4">ENG<br />IN</p>
        <button type="button" aria-label="Network, volume and battery" className="mr-[14px] flex items-center gap-[6px]">
          <Line size={18} box={18} weight={1.400}><path d="M1 7c4.500-4.700 11.500-4.700 16 0M3.500 9.700c3-3.200 8-3.200 11 0M6 12.300c1.700-1.700 4.300-1.700 6 0" /><circle cx="9" cy="14.500" r="1" fill="currentColor" /></Line>
          <Volume />
          <svg width="16" height="14" viewBox="0 0 16 14" fill="none" stroke="#1a1a1a" strokeWidth="1.300" aria-hidden="true">
            <path d="M4 3.700H2.500A1.500 1.500 0 0 0 1 5.200v6c0 .8.700 1.500 1.500 1.500H12c.8 0 1.500-.7 1.500-1.500v-6c0-.8-.7-1.500-1.500-1.500h-1M15.200 6.500v3.500" />
            <path d="M3 6.500h2.500L6 9.500h4V11H3z" fill="#1a1a1a" strokeWidth=".5" />
            <path d="M8.500 0 5.800 5h3.500L7.500 9" strokeWidth="1.400" />
          </svg>
        </button>
        <p className="w-[66px] whitespace-nowrap text-right leading-4">17:16<br />16-05-2025</p>
      </div>
    </footer>
  );
}

export default function App() {
  return (
    <div className="flex h-screen flex-col overflow-hidden bg-white font-['Open_Sans',sans-serif] text-[12px] leading-4 text-black">
      <SessionBar />
      <BrowserBar />
      <MaximoApp />
      <RemoteTaskbar />
      <LocalTaskbar />
    </div>
  );
}
